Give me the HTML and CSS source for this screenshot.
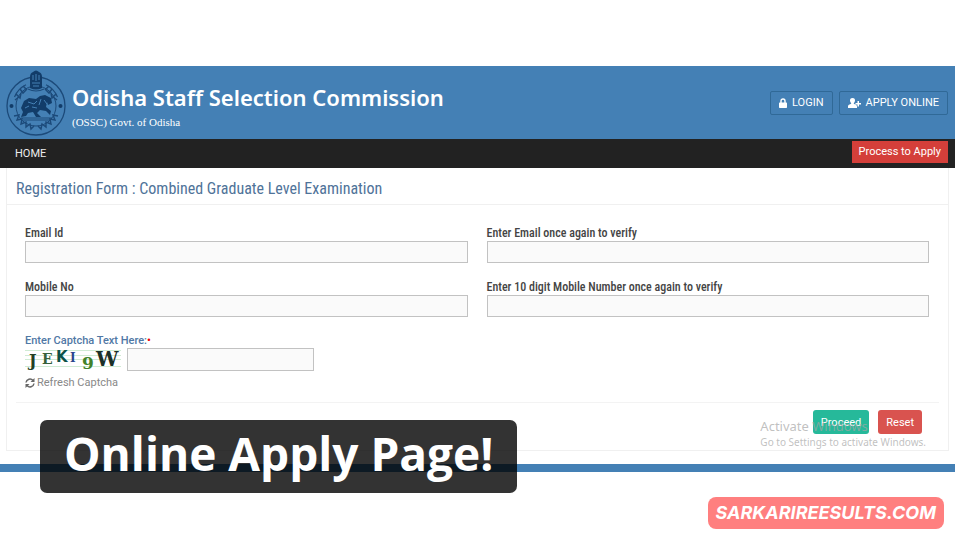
FILE: index.html
```html
<!DOCTYPE html>
<html lang="en">
<head>
<meta charset="utf-8">
<meta name="viewport" content="width=device-width, initial-scale=1">
<title>Odisha Staff Selection Commission</title>
<link rel="stylesheet" href="styles.css">
</head>
<body>
<div class="page">
  <header class="masthead">
    <svg class="seal" viewBox="0 0 60 68" aria-hidden="true">
      <g fill="none" stroke="#1c4a7a">
        <circle cx="30" cy="37" r="29" stroke-width="1.3"/>
        <circle cx="30" cy="37" r="20" stroke-width="1"/>
        <path d="M8.500 28A23.500 23.500 0 0 1 20 15.800M40 15.800A23.500 23.500 0 0 1 51.500 28" stroke-width="1.200"/>
        <path d="M9 31l4-3M10 25l4 4 1-5M14 20l3 4 3-3M17 17l4 4M51 31l-4-3M50 25l-4 4-1-5M46 20l-3 4-3-3M43 17l-4 4" stroke-width="1.500"/>
        <path d="M8 47l5-1-2 5 5-1-1 5 5-2v5l4-3 1 5 3-3M52 47l-5-1 2 5-5-1 1 5-5-2v5l-4-3-1 5-3-3" stroke-width="1.400"/>
        <path d="M17 51h27M15 49h31M22 20q8 4 16 0" stroke-width="1.200"/>
      </g>
      <g fill="#123c69">
        <path d="M24 19V8q0-4 3-5 3-3 6 0 3 1 3 5v11q-6 3-12 0z"/>
        <circle cx="5.500" cy="37" r="2"/><circle cx="54.500" cy="37" r="2"/>
        <path d="M15 48l2-5-2-4 3-7 5-3 7 1 4-3 5-1 6 3 1 5-4 2-1-3-1 5 5 4-1 4-4-4-6-1-3 3 4 4h-5l-3-5-5 1-2 3z"/>
      </g>
      <g fill="none" stroke="#4480b5">
        <path d="M27 6v5M30 5v7M33 6v5M26 14h8M27 17h6M22 33l6 2 3-3M35 30l-2 6M19 39l4-2M38 31l3 4M26 38l5 1" stroke-width="1"/>
      </g>
    </svg>
    <div class="brand">
      <h1>Odisha Staff Selection Commission</h1>
      <p>(OSSC) Govt. of Odisha</p>
    </div>
    <div class="account">
      <button type="button" class="outline">
        <svg class="lock" viewBox="0 0 8 10" aria-hidden="true"><path d="M2 5V3a2 2 0 0 1 4 0v2" fill="none" stroke="#fff" stroke-width="1.400"/><rect y="4.500" width="8" height="5.500" rx=".7" fill="#fff"/></svg>
        LOGIN
      </button>
      <button type="button" class="outline">
        <svg class="user" viewBox="0 0 13 10" aria-hidden="true"><path d="M4.500 0C6.500 0 7 1.200 7 2.500S6 5 5.700 5.400c.2.800 3.300.8 3.300 3.100V10H0V8.500C0 6.200 3 6.200 3.300 5.400 3 5 2 3.800 2 2.500S2.500 0 4.500 0zM9.500 3h1.500v2h2v1.500h-2v2H9.500v-2h-2V5h2z" fill="#fff"/></svg>
        APPLY ONLINE
      </button>
    </div>
  </header>
  <nav class="menu">
    <a href="#home">HOME</a>
    <a href="#apply" class="process">Process to Apply</a>
  </nav>
  <main class="panel">
    <h2>Registration Form : Combined Graduate Level Examination</h2>
    <form class="form">
      <div class="fields">
        <div class="field"><label for="email">Email Id</label><input id="email" type="email"></div>
        <div class="field"><label for="email2">Enter Email once again to verify</label><input id="email2" type="email"></div>
        <div class="field"><label for="mobile">Mobile No</label><input id="mobile" type="tel"></div>
        <div class="field"><label for="mobile2">Enter 10 digit Mobile Number once again to verify</label><input id="mobile2" type="tel"></div>
      </div>
      <div class="captcha">
        <label for="captcha">Enter Captcha Text Here:<span class="required">•</span></label>
        <div class="captcha-row">
          <svg class="code" viewBox="0 0 96 23">
            <path d="M0 2.500h96M0 7.500h96M0 11.500h96M0 18.500h96" stroke="#d0ebd4" stroke-width="1"/>
            <g font-family="'DejaVu Serif', serif" font-weight="bold">
              <text x="4" y="18" font-size="16" fill="#244025">J</text>
              <text x="17" y="16" font-size="14" fill="#37613b">E</text>
              <text x="31" y="14" font-size="15" font-family="'DejaVu Sans', sans-serif" fill="#0c5148">K</text>
              <text x="45" y="14" font-size="12" fill="#29458e">I</text>
              <text x="57" y="21" font-size="17" fill="#43822a">9</text>
              <text x="71" y="18" font-size="20" fill="#1b3028">W</text>
            </g>
          </svg>
          <input id="captcha" type="text">
        </div>
        <button type="button" class="refresh">
          <svg viewBox="0 0 10 10" aria-hidden="true"><path d="M1 4.500A4 4 0 0 1 8 2.500M9 5.500A4 4 0 0 1 2 7.500" fill="none" stroke="#666" stroke-width="1.500"/><path d="M9.500 0v4h-4zM.5 10V6h4z" fill="#666"/></svg>
          Refresh Captcha
        </button>
      </div>
      <div class="actions">
        <button type="submit" class="proceed">Proceed</button>
        <button type="reset" class="reset">Reset</button>
      </div>
    </form>
    <div class="watermark"><p>Activate Windows</p><p>Go to Settings to activate Windows.</p></div>
  </main>
  <footer class="bar"></footer>
  <div class="caption">Online Apply Page!</div>
  <div class="site">SARKARIREESULTS.COM</div>
</div>
</body>
</html>
```
FILE: styles.css
```css
* { box-sizing: border-box; }
body { margin: 0; background: #fff; font-family: Roboto, sans-serif; font-size: 11px; color: #444; }
h1, h2, p { margin: 0; }
button, input { font: inherit; }
.page { position: relative; padding: 66px 1px 66px 0; }
.masthead { display: flex; align-items: center; min-height: 73px; padding: 0 7px 0 6px; background: #4480b5; color: #fff; }
.seal { width: 60px; height: 68px; flex: none; }
.brand { flex: 1; padding: 8px 0 0 6px; }
.brand h1 { font: 600 22px/28px "Noto Sans", sans-serif; white-space: nowrap; }
.brand p { margin-top: 3px; font: 11px/16px "Liberation Serif", serif; }
.account { display: flex; gap: 6px; }
.outline { display: flex; align-items: center; gap: 5px; height: 24px; padding: 0 8px; border: 1px solid #306997; border-radius: 2px; background: none; color: #fff; }
.lock { width: 8px; height: 10px; }
.user { width: 13px; height: 10px; }
.menu { display: flex; justify-content: space-between; align-items: center; height: 29px; padding: 0 7px 0 15px; background: #222; }
.menu a { color: #eee; text-decoration: none; }
.menu .process { align-self: flex-start; margin-top: 2px; padding: 0 7px; background: #d43f3a; color: #fff; line-height: 22px; }
.panel { position: relative; margin: 0 6px; border: 1px solid #f0f0f0; border-top: 0; }
.panel h2 { padding: 11px 9px 5px; border-bottom: 1px solid #f0f0f0; font: 400 16px/20px "Roboto Condensed", "Liberation Sans Narrow", Roboto, sans-serif; color: #4f7399; }
.form { padding: 20px 9px 16px; }
.fields { display: grid; grid-template-columns: 1fr 1fr; gap: 16px 19px; padding: 0 10px 0 9px; }
.field label { display: block; font: 500 12px/16px "Roboto Condensed", "Liberation Sans Narrow", Roboto, sans-serif; }
input { display: block; width: 100%; height: 22px; padding: 0 6px; border: 1px solid #c2c2c2; border-radius: 0; background: #fafafa; }
.captcha { padding: 16px 9px 0; }
.captcha label { display: block; line-height: 15px; font-weight: 500; color: #5078a5; }
.required { color: #e00; }
.captcha-row { display: flex; gap: 6px; }
.captcha-row input { width: 187px; height: 23px; }
.code { width: 96px; height: 23px; }
.refresh { display: flex; align-items: center; gap: 2px; margin-top: 4px; padding: 0; border: 0; background: none; line-height: 16px; color: #888; }
.refresh svg { width: 10px; height: 10px; }
.actions { display: flex; justify-content: flex-end; gap: 9px; margin-top: 11px; padding: 7px 17px 0 0; border-top: 1px solid #f3f3f3; }
.actions button { height: 24px; padding: 0 8px; border: 0; border-radius: 3px; color: #fff; }
.actions .proceed { background: #26b99a; }
.actions .reset { background: #d9534f; }
.watermark { position: absolute; right: 22px; bottom: 1px; font-family: "Noto Sans", sans-serif; color: rgba(165, 165, 165, 0.7); pointer-events: none; }
.watermark p { font-size: 10px; line-height: 14px; }
.watermark p:first-child { font-size: 13px; line-height: 18px; }
.bar { height: 8px; margin-top: 13px; background: #4480b5; }
.caption { position: absolute; left: 40px; bottom: 45px; padding: 0 24px 6px; border-radius: 7px; background: rgba(0, 0, 0, 0.8); color: #fff; font: bold 46px/67px "Open Sans", sans-serif; white-space: nowrap; }
.site { position: absolute; right: 12px; bottom: 9px; padding: 0 8px; border-radius: 8px; background: #ff7f7f; color: #fff; font: italic bold 18px/32px Inter, sans-serif; }
```
